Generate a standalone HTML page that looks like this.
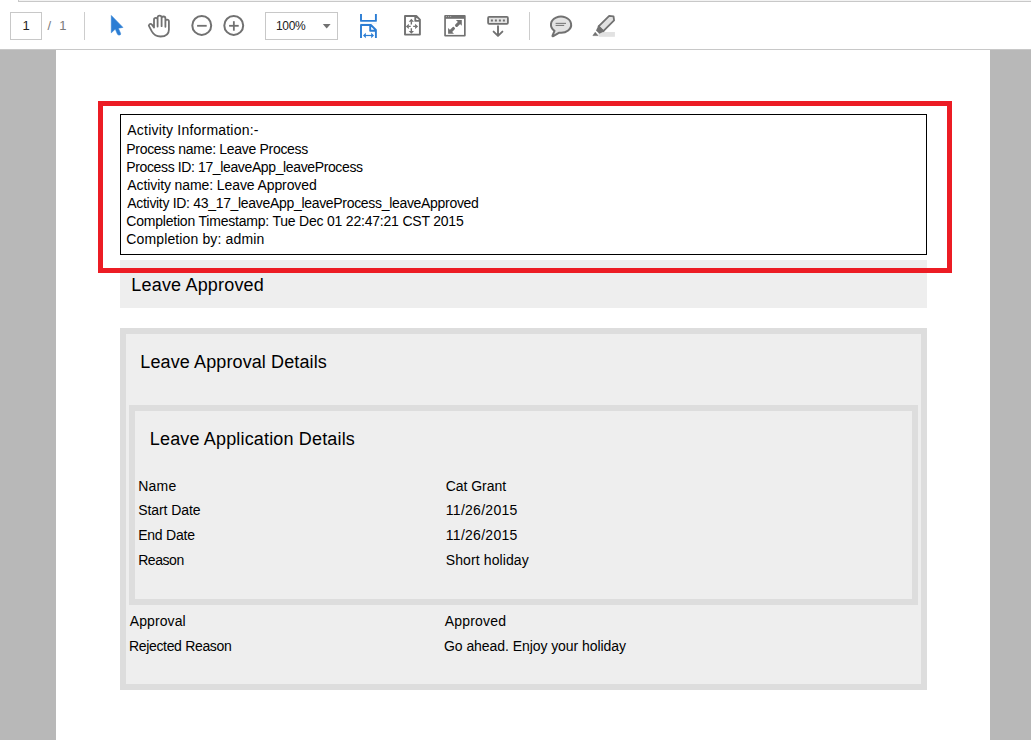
<!DOCTYPE html>
<html><head><meta charset="utf-8">
<style>
html,body{margin:0;padding:0;width:1031px;height:740px;overflow:hidden;background:#fff;}
body{position:relative;font-family:"Liberation Sans",sans-serif;}
.a{position:absolute;}
.box{box-sizing:border-box;}
.t{white-space:nowrap;color:#000;line-height:20px;}
.sep{width:1px;background:#cdcdcd;top:12px;height:28px;}
</style></head><body>
<div class="a" style="left:18px;top:-1px;width:1020px;height:2px;background:#f3f3f3;border-left:1px solid #c8c8c8;border-bottom:1px solid #c8c8c8;"></div>
<div class="a" style="left:0;top:49px;width:1031px;height:1px;background:#c8c8c8;"></div>
<div class="a" style="left:0;top:50px;width:1031px;height:690px;background:#b8b8b8;"></div>
<div class="a" style="left:56px;top:50px;width:934px;height:690px;background:#fff;"></div>

<div class="a box" style="left:10px;top:12px;width:32px;height:28px;border:1px solid #c8c8c8;"></div>
<div class="a t" style="left:22.5px;top:16px;font-size:13px;color:#222;">1</div>
<div class="a t" style="left:47.5px;top:16px;font-size:13px;color:#7a7a7a;">/</div>
<div class="a t" style="left:59.3px;top:16px;font-size:13px;color:#7a7a7a;">1</div>
<div class="a sep" style="left:84px;"></div>
<div class="a box" style="left:265px;top:12px;width:73px;height:28px;border:1px solid #c8c8c8;"></div>
<div class="a t" style="left:276px;top:16px;font-size:12px;letter-spacing:-0.3px;color:#222;">100%</div>
<div class="a sep" style="left:529px;"></div>
<svg class="a" style="left:0;top:0" width="1031" height="49" viewBox="0 0 1031 49">
<!-- select arrow -->
<path d="M111.3,15.5 L122.9,27.4 L118.3,28.2 L120.6,33.4 Q121.1,34.9 119.2,35.1 Q117.9,35.2 117.4,34 L115.3,29.1 L111.3,32.8 Z" fill="#2b7dd4" stroke="#2b7dd4" stroke-width="0.6" stroke-linejoin="round"/>
<!-- hand -->
<path d="M154,27.6 V19.6 A1.8,1.8 0 0 1 157.6,19.6 V26.6 M157.6,19.6 V17.55 A2,2 0 0 1 161.6,17.55 V26.2 M161.6,18.4 A1.9,1.9 0 0 1 165.4,18.4 V26.75 M165.4,21.4 A1.75,1.75 0 0 1 168.9,21.4 V29.8 C168.9,34 165.8,36.5 160.5,36.5 C156.3,36.5 153.6,34.6 151.8,31.4 L149.3,26.7 A1.6,1.6 0 0 1 151.8,24.5 L154,27.6" fill="#fff" stroke="#717171" stroke-width="1.8" stroke-linejoin="round" stroke-linecap="round"/>
<!-- zoom out -->
<circle cx="201.75" cy="25.45" r="9.45" fill="none" stroke="#717171" stroke-width="2"/>
<rect x="197.1" y="24.9" width="9.6" height="1.8" fill="#717171"/>
<!-- zoom in -->
<circle cx="233.75" cy="25.45" r="9.45" fill="none" stroke="#717171" stroke-width="2"/>
<rect x="229.1" y="24.9" width="9.6" height="1.8" fill="#717171"/>
<rect x="232.95" y="21.2" width="1.8" height="9.5" fill="#717171"/>
<!-- dropdown tri -->
<path d="M322.8,24 H330.6 L326.7,28.4 Z" fill="#717171"/>
<!-- fit width (blue) -->
<path d="M361,13.9 V20.9 H375.9 V13.9" fill="none" stroke="#2b7dd4" stroke-width="1.9" stroke-linejoin="round"/>
<path d="M361,38.1 V25 H370.9 L375.9,30 V38.1 M370.2,25 V30.7 H376" fill="none" stroke="#2b7dd4" stroke-width="1.9" stroke-linejoin="round"/>
<rect x="360" y="22.8" width="17" height="0.8" fill="#2b7dd4" opacity="0.12"/>
<rect x="364.5" y="34.9" width="7.5" height="1.2" fill="#2b7dd4"/>
<path d="M363,35.5 L365.8,32.8 V38.2 Z M374,35.5 L371.2,32.8 V38.2 Z" fill="#2b7dd4"/>
<!-- file arrows -->
<path d="M405,34.6 V16 H416.3 L419.9,19.6 V34.6 Z M415.3,16 V20.9 H419.9" fill="none" stroke="#717171" stroke-width="1.9" stroke-linejoin="round"/>
<path d="M411.35,18.8 L414,21.7 H408.7 Z M411.35,33.8 L414,31.1 H408.7 Z M405.9,26.4 L408.8,23.8 V29 Z M418.1,26.4 L415.1,23.8 V29 Z" fill="#717171"/>
<path d="M411.35,21.5 V24.6 M411.35,28.2 V31.3 M408.6,26.4 H410.7 M413.2,26.4 H415.3" stroke="#717171" stroke-width="1.4"/>
<!-- fullscreen -->
<rect x="444.2" y="15" width="21.5" height="21.6" rx="1" fill="#717171"/>
<rect x="445.9" y="18.8" width="18.1" height="16.1" fill="#fff"/>
<rect x="445.9" y="16" width="1.1" height="1.1" fill="#a9a9a9"/>
<rect x="448" y="16" width="1.1" height="1.1" fill="#a9a9a9"/>
<rect x="450.1" y="16" width="1.1" height="1.1" fill="#a9a9a9"/>
<path d="M455.9,20.1 H461.8 V25.8 Z M448.1,27.9 V33.8 H454 Z" fill="#717171"/>
<path d="M459.4,22.6 L456.6,25.4 M450.6,31.3 L453.4,28.5" stroke="#717171" stroke-width="3.1" stroke-linecap="round"/>
<!-- download toolbar -->
<rect x="488.1" y="16.9" width="19.8" height="6.9" rx="1" fill="#e3e3e3" stroke="#717171" stroke-width="1.8"/>
<rect x="490.9" y="19.5" width="2" height="2" fill="#717171"/><rect x="494.9" y="19.5" width="2" height="2" fill="#717171"/><rect x="498.9" y="19.5" width="2" height="2" fill="#717171"/><rect x="502.9" y="19.5" width="2" height="2" fill="#717171"/>
<path d="M498,26.3 V35.6 M493.6,31.6 L498,35.9 L502.4,31.6" fill="none" stroke="#717171" stroke-width="1.9" stroke-linecap="round" stroke-linejoin="round"/>
<!-- comment -->
<path d="M554.5,30.9 L552.5,35.6 Q552.3,36.5 553.3,36.1 L559.25,32.7 A10.1,8.1 0 1 0 554.5,30.9 Z" fill="#e3e3e3" stroke="#717171" stroke-width="2" stroke-linejoin="round"/>
<path d="M555.6,23.35 H566 M555.6,25.4 H564.2" stroke="#717171" stroke-width="1"/>
<!-- highlighter -->
<rect x="598.6" y="32" width="16.3" height="4.8" fill="#e2e2e2"/>
<path d="M592.9,35.6 H598 L595.2,32.3 Z" fill="#717171" stroke="#717171" stroke-width="0.6" stroke-linejoin="round"/>
<g transform="translate(597.7,32.1) rotate(-45)">
<path d="M4.6,-3.35 H19.6 L22.3,0.1 L19.8,3.35 H4.6 Z" fill="#e2e2e2" stroke="#717171" stroke-width="1.8" stroke-linejoin="round"/>
<path d="M0,-2.4 L5.4,-4.25 V4.25 L0,2.4 Z" fill="#717171"/>
</g>
</svg>

<div class="a box" style="left:120px;top:114px;width:807px;height:141px;border:1px solid #000;"></div>
<div class="a" style="left:120px;top:260px;width:807px;height:48px;background:#eeeeee;"></div>
<div class="a box" style="left:120px;top:328px;width:807px;height:362px;border:6px solid #dddddd;background:#eeeeee;"></div>
<div class="a box" style="left:129px;top:405px;width:789px;height:200px;border:6px solid #dddddd;background:#eeeeee;"></div>
<div class="a t" style="left:127.3px;top:120px;font-size:14px;letter-spacing:0.205px;">Activity Information:-</div>
<div class="a t" style="left:126.3px;top:139px;font-size:14px;letter-spacing:-0.304px;">Process name: Leave Process</div>
<div class="a t" style="left:126.3px;top:157px;font-size:14px;letter-spacing:-0.374px;">Process ID: 17_leaveApp_leaveProcess</div>
<div class="a t" style="left:127.3px;top:175px;font-size:14px;letter-spacing:-0.1px;">Activity name: Leave Approved</div>
<div class="a t" style="left:127.3px;top:193px;font-size:14px;letter-spacing:-0.313px;">Activity ID: 43_17_leaveApp_leaveProcess_leaveApproved</div>
<div class="a t" style="left:126.3px;top:211px;font-size:14px;letter-spacing:-0.208px;">Completion Timestamp: Tue Dec 01 22:47:21 CST 2015</div>
<div class="a t" style="left:126.3px;top:229px;font-size:14px;letter-spacing:0.132px;">Completion by: admin</div>
<div class="a t" style="left:131.3px;top:275px;font-size:18px;letter-spacing:0.185px;">Leave Approved</div>
<div class="a t" style="left:140.3px;top:352px;font-size:18px;letter-spacing:0.114px;">Leave Approval Details</div>
<div class="a t" style="left:149.8px;top:429px;font-size:18px;letter-spacing:0.163px;">Leave Application Details</div>
<div class="a t" style="left:138.2px;top:476px;font-size:14px;letter-spacing:0.267px;">Name</div>
<div class="a t" style="left:445.8px;top:476px;font-size:14px;letter-spacing:-0.05px;">Cat Grant</div>
<div class="a t" style="left:138.2px;top:500px;font-size:14px;letter-spacing:-0.078px;">Start Date</div>
<div class="a t" style="left:445.8px;top:500px;font-size:14px;letter-spacing:0.278px;">11/26/2015</div>
<div class="a t" style="left:138.2px;top:525px;font-size:14px;letter-spacing:-0.229px;">End Date</div>
<div class="a t" style="left:445.8px;top:525px;font-size:14px;letter-spacing:0.278px;">11/26/2015</div>
<div class="a t" style="left:138.2px;top:550px;font-size:14px;letter-spacing:-0.44px;">Reason</div>
<div class="a t" style="left:445.8px;top:550px;font-size:14px;letter-spacing:0.1px;">Short holiday</div>
<div class="a t" style="left:129.7px;top:611px;font-size:14px;letter-spacing:0.1px;">Approval</div>
<div class="a t" style="left:444.8px;top:611px;font-size:14px;letter-spacing:0.171px;">Approved</div>
<div class="a t" style="left:128.9px;top:636px;font-size:14px;letter-spacing:-0.321px;">Rejected Reason</div>
<div class="a t" style="left:444px;top:636px;font-size:14px;letter-spacing:-0.063px;">Go ahead. Enjoy your holiday</div>

<div class="a box" style="left:98px;top:101px;width:854px;height:172px;border:5px solid #ec1c24;"></div>
</body></html>
